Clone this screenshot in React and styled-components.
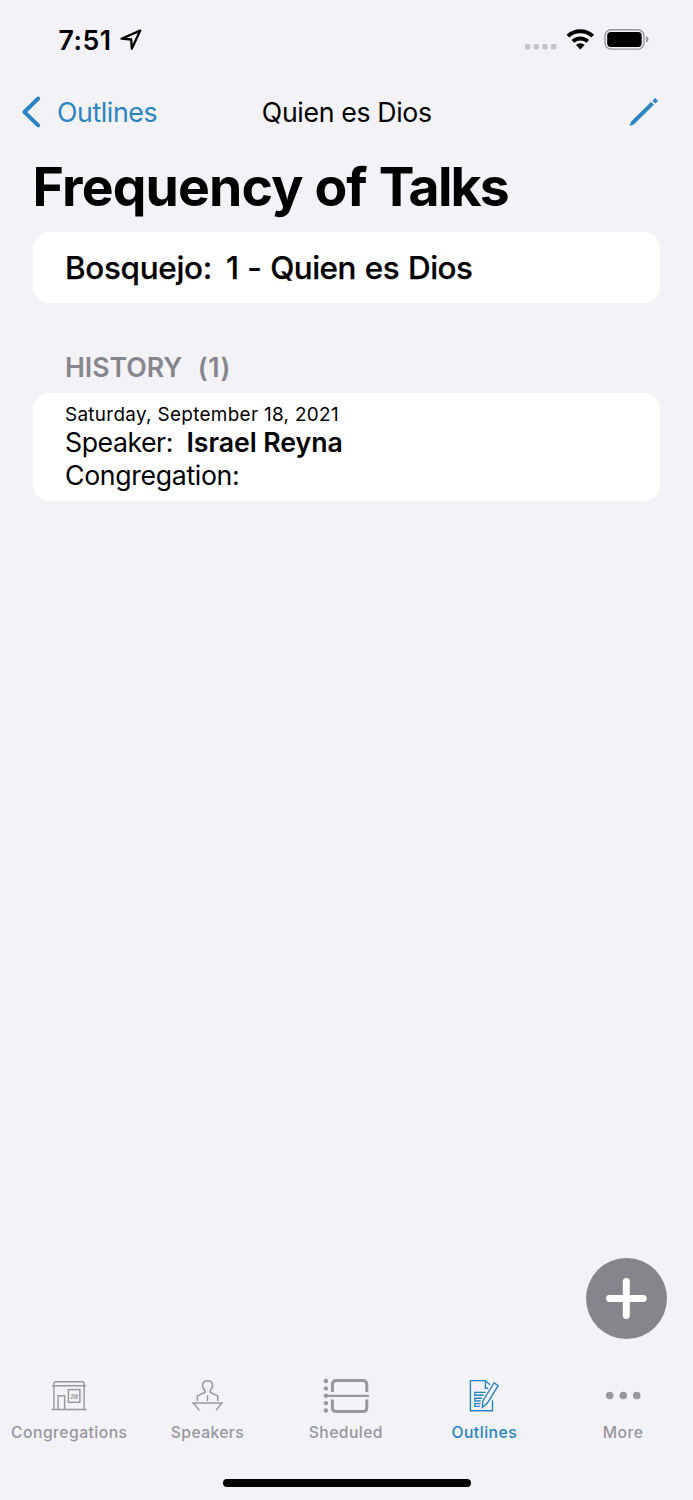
import React from "react";
import styled, { createGlobalStyle } from "styled-components";

const BLUE = "#2a84c1";
const GRAY = "#87868c";
const TAB_GRAY = "#98979c";

const GlobalStyle = createGlobalStyle`
  * { box-sizing: border-box; }
  body { margin: 0; background: #f2f2f7; }
`;

const Screen = styled.div`
  position: relative;
  display: flex;
  flex-direction: column;
  width: 693px;
  height: 1500px;
  overflow: hidden;
  background: #f2f2f7;
  color: #000;
  font-family: Inter, "Liberation Sans", sans-serif;
  font-size: 26.7px;
`;

const Svg = styled.svg`
  display: block;
  flex: none;
  fill: none;
`;

const StatusBar = styled.div`
  display: flex;
  justify-content: space-between;
  align-items: center;
  height: 80px;
  padding: 0 43px 0 58.5px;
`;

const StatusGroup = styled.div`
  display: flex;
  align-items: center;
`;

const Time = styled.span`
  width: 60px;
  font-weight: 600;
  letter-spacing: 0.5px;
`;

const NavBar = styled.nav`
  display: grid;
  grid-template-columns: 1fr auto 1fr;
  align-items: center;
  height: 64px;
  padding: 0 34px 0 21px;
`;

const BackButton = styled.button`
  display: flex;
  align-items: center;
  gap: 16px;
  padding: 0;
  border: 0;
  background: none;
  color: ${BLUE};
  font: inherit;
  letter-spacing: -0.38px;
`;

const NavTitle = styled.span`
  padding-left: 13.5px;
  letter-spacing: -0.36px;
`;

const EditButton = styled.button`
  justify-self: end;
  padding: 0;
  border: 0;
  background: none;
`;

const Title = styled.h1`
  margin: 0;
  padding: 1px 0 3px 32.6px;
  font-size: 53.5px;
  font-weight: 700;
  line-height: 84px;
  letter-spacing: -0.85px;
  white-space: nowrap;
`;

const Card = styled.section`
  margin: 0 33px;
  padding: ${(p) => p.$padding};
  border-radius: 16px;
  background: #fff;
`;

const OutlineName = styled.div`
  display: flex;
  gap: 14px;
  font-size: 31.4px;
  font-weight: 500;
  line-height: 70px;
  word-spacing: 1px;
  -webkit-text-stroke: 0.25px #000;
`;

const Label = styled.span`
  letter-spacing: ${(p) => p.$spacing || 0}px;
  font-weight: ${(p) => p.$weight || "inherit"};
`;

const SectionHeader = styled.h2`
  display: flex;
  gap: 15.5px;
  height: 30px;
  margin: 49px 0 11px;
  padding-left: 65px;
  color: ${GRAY};
  font-size: 26.7px;
  font-weight: 600;
  line-height: 30px;
`;

const TalkDate = styled.div`
  margin-bottom: 1px;
  font-size: 18.9px;
  line-height: 20px;
  letter-spacing: 0.32px;
`;

const TalkLine = styled.div`
  display: flex;
  gap: 13.5px;
  line-height: 33px;
`;

const Spacer = styled.div`
  flex: 1;
`;

const AddButton = styled.button`
  position: absolute;
  right: 26px;
  bottom: 160.6px;
  display: grid;
  place-items: center;
  width: 81px;
  height: 81px;
  padding: 0;
  border: 0;
  border-radius: 50%;
  background: #86858b;
`;

const TabBar = styled.div`
  display: grid;
  grid-template-columns: repeat(5, 1fr);
  height: 103.5px;
`;

const Tab = styled.div`
  display: flex;
  flex-direction: column;
  align-items: center;
  gap: 7.5px;
  color: ${(p) => (p.$active ? BLUE : TAB_GRAY)};
  font-size: 15.7px;
  font-weight: 500;
  line-height: 20px;
  letter-spacing: ${(p) => p.$spacing}px;
`;

const TabLabel = styled.span`
  padding-right: ${(p) => p.$inset || 0}px;
`;

const SignText = styled.text`
  fill: currentColor;
  font-family: "Liberation Sans", sans-serif;
  font-size: 7.4px;
  font-style: italic;
  font-weight: 700;
  letter-spacing: 0;
`;

const HomeIndicator = styled.div`
  align-self: center;
  width: 248px;
  height: 8.5px;
  margin-bottom: 13px;
  border-radius: 5px;
  background: #000;
`;

const LocationIcon = () => (
  <Svg width="24" height="24" viewBox="119 28 24 24">
    <path d="M140.2 30.6 121.6 38.7 131.2 39.5 131.8 48.8Z" stroke="#000" strokeWidth="2.3" strokeLinejoin="round" />
  </Svg>
);

const StatusIcons = () => (
  <Svg width="126" height="24" viewBox="524 28 126 24">
    {[0, 1, 2, 3].map((i) => (
      <rect key={i} x={524.9 + i * 8.65} y="43.9" width="5.5" height="5.5" rx="1.6" fill="#c3c3c8" />
    ))}
    <g stroke="#000" strokeWidth="3.9">
      <path d="M567.9 36.2A17.9 17.9 0 0 1 592.7 36.2" />
      <path d="M572.9 41.4A10.7 10.7 0 0 1 587.7 41.4" />
    </g>
    <path d="M576 45A6 6 0 0 1 584.6 45L580.3 49.4Z" fill="#000" />
    <rect x="605" y="29.7" width="39" height="19.4" rx="6" stroke="#98989c" strokeWidth="1.4" />
    <rect x="607.2" y="31.9" width="34.5" height="15" rx="3.6" fill="#000" />
    <path d="M646 36.2C649.4 37 649.4 41.6 646 42.4Z" fill="#98989c" />
  </Svg>
);

const ChevronIcon = () => (
  <Svg width="20" height="32" viewBox="21 96 20 32">
    <path d="M38.2 98.5 24.4 112 38.2 125.3" stroke="currentColor" strokeWidth="3.9" strokeLinecap="round" strokeLinejoin="round" />
  </Svg>
);

const PencilIcon = () => (
  <Svg width="30" height="30" viewBox="629 97 30 30">
    <path d="M630 125.6 631.3 121.8 651 102.3 653.5 104.8 633.7 124.3Z" fill={BLUE} stroke={BLUE} strokeWidth=".6" strokeLinejoin="round" />
    <path d="M655.2 98.5 657.6 100.9 655.2 103.1 652.8 100.7Z" fill={BLUE} stroke={BLUE} strokeWidth=".9" strokeLinejoin="round" />
  </Svg>
);

const TabIcon = ({ left, children }) => (
  <Svg width="60" height="40" viewBox={`${left} 15 60 40`} stroke="currentColor">
    {children}
  </Svg>
);

const HallIcon = () => (
  <TabIcon left={39.3}>
    <g strokeWidth="1.4">
      <path d="M54.2 49.3V22.8L55.4 21.8H83.2L84.4 22.8V49.3M52.3 25.7H86.2M51.8 49.5H87" />
      <path d="M58.4 49.3V35.8H64.9V49.3" />
      <rect x="68.7" y="29.6" width="11.5" height="12.7" />
    </g>
    <SignText x="74.3" y="38.8" textAnchor="middle" textLength="8.4" lengthAdjust="spacingAndGlyphs" stroke="none">JW</SignText>
  </TabIcon>
);

const SpeakerIcon = () => (
  <TabIcon left={37.9}>
    <g strokeWidth="1.5">
      <path d="M57.3 41V35.9L64.8 32.5V30.3C61.5 27.5 61.2 20.7 67.4 20.7S73.4 27.5 70.2 30.3V32.5L77.6 35.9V41M67.4 35.2V41" />
      <path d="M59.3 50.4 53.3 43H81.7L75.9 50.4M52.2 42.9H82.8" />
    </g>
  </TabIcon>
);

const ScheduleIcon = () => (
  <TabIcon left={36.5}>
    {[21, 28.4, 35.8, 43.1, 50.5].map((y) => (
      <circle key={y} cx="46.4" cy={y} r="2.2" fill="currentColor" stroke="none" />
    ))}
    <path d="M46 35.8H88.6" strokeWidth="2.2" strokeLinecap="round" />
    <path d="M52.9 32V24.6Q52.9 20.5 57 20.5H83.2Q87.3 20.5 87.3 24.6V32M52.9 39.4V47.4Q52.9 51.5 57 51.5H83.2Q87.3 51.5 87.3 47.4V39.4" strokeWidth="3" />
  </TabIcon>
);

const OutlineIcon = () => (
  <TabIcon left={35.1}>
    <g strokeWidth="1.4">
      <path d="M72.6 40.3V50.8H50.5V20.6H65.5L70.2 25M65.5 20.6V28.3H68.2" />
      <path d="M74.2 22.9 78.3 25.6 67.4 43.2 62.4 47.3 62.9 40.9Z" />
      <path d="M65.7 32.4H54.9V35.2H63.6M62.2 38.3H54.9V41H60.6M60.6 43.6H54.9V46.4H60.2" />
    </g>
  </TabIcon>
);

const MoreIcon = () => (
  <TabIcon left={173.7}>
    {[189.4, 203, 216.4].map((x) => (
      <circle key={x} cx={x} cy="35.5" r="3.8" fill="currentColor" stroke="none" />
    ))}
  </TabIcon>
);

const TABS = [
  { label: "Congregations", Icon: HallIcon, spacing: 0.46 },
  { label: "Speakers", Icon: SpeakerIcon, spacing: 0.38, inset: 0.8 },
  { label: "Sheduled", Icon: ScheduleIcon, spacing: 0.42, inset: 1.2 },
  { label: "Outlines", Icon: OutlineIcon, spacing: 0.5, inset: 1.6 },
  { label: "More", Icon: MoreIcon, spacing: 0.5, inset: 1.2 },
];

export default function App() {
  return (
    <Screen>
      <GlobalStyle />
      <StatusBar>
        <StatusGroup>
          <Time>7:51</Time>
          <LocationIcon />
        </StatusGroup>
        <StatusIcons />
      </StatusBar>
      <NavBar>
        <BackButton>
          <ChevronIcon />
          Outlines
        </BackButton>
        <NavTitle>Quien es Dios</NavTitle>
        <EditButton aria-label="Edit">
          <PencilIcon />
        </EditButton>
      </NavBar>
      <Title>
        Frequency of <Label $spacing={-1.8}>Talks</Label>
      </Title>
      <Card $padding="1px 32px 0">
        <OutlineName>
          <Label $spacing={-0.3}>Bosquejo:</Label>
          <Label $spacing={-0.5}>1 - Quien es Dios</Label>
        </OutlineName>
      </Card>
      <SectionHeader>
        <Label $spacing={-0.05}>HISTORY</Label>
        <Label $spacing={0.6}>(1)</Label>
      </SectionHeader>
      <Card $padding="12px 32px 8.5px">
        <TalkDate>Saturday, September 18, 2021</TalkDate>
        <TalkLine>
          <Label $spacing={-0.46}>Speaker:</Label>
          <Label $spacing={-0.05} $weight={600}>Israel Reyna</Label>
        </TalkLine>
        <TalkLine>
          <Label $spacing={-0.34}>Congregation:</Label>
        </TalkLine>
      </Card>
      <Spacer />
      <TabBar>
        {TABS.map(({ label, Icon, spacing, inset }) => (
          <Tab key={label} $active={label === "Outlines"} $spacing={spacing}>
            <Icon />
            <TabLabel $inset={inset}>{label}</TabLabel>
          </Tab>
        ))}
      </TabBar>
      <HomeIndicator />
      <AddButton aria-label="Add">
        <Svg width="41" height="41" viewBox="0 0 41 41">
          <path d="M20.3 3.5V37.5M3.4 20.5H37.2" stroke="#fff" strokeWidth="7" strokeLinecap="round" />
        </Svg>
      </AddButton>
    </Screen>
  );
}
